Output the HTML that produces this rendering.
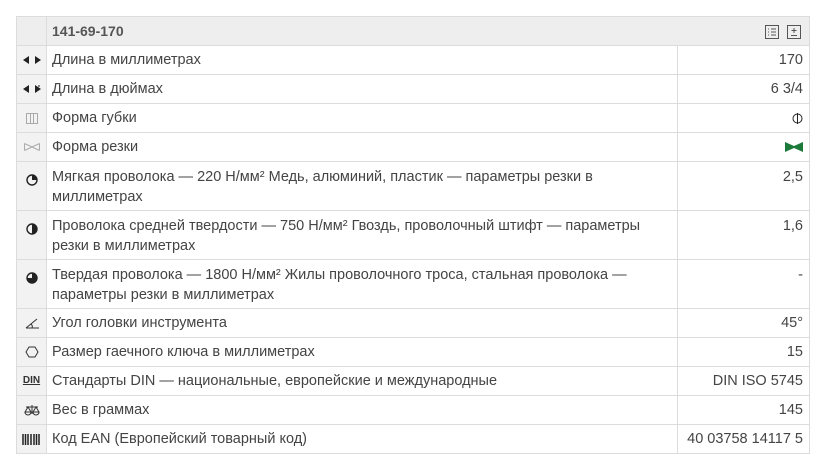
<!DOCTYPE html><html><head><meta charset="utf-8"><style>
body{margin:0;background:#fff;font-family:"Liberation Sans",sans-serif;color:#444;font-size:14.5px}
table{position:absolute;left:16px;top:16px;width:794px;border-collapse:collapse;table-layout:fixed}
td{border:1px solid #dcdcdc;padding:0 5px;vertical-align:top;line-height:20px;overflow:hidden;white-space:nowrap}
td.i{background:#f2f2f2;text-align:center;padding:0;font-size:11px;color:#333}
td.v{text-align:right;padding-right:6px}
tr.h td{background:#eeeeee;font-weight:bold;height:28px;vertical-align:middle;color:#555;font-size:14px}
tr.s td{height:28px;vertical-align:middle}
tr.t td{height:37px;padding-top:5px;padding-bottom:3px;white-space:normal}
tr.t td.i{padding-top:8px}
svg{display:inline-block;vertical-align:middle}
.hi{position:absolute;right:8px;top:7px;line-height:14px}
</style></head><body>
<table>
<colgroup><col style="width:30px"><col style="width:631px"><col style="width:132px"></colgroup>
<tr class="h"><td class="i"></td><td colspan="2" style="position:relative">141-69-170<span class="hi"><svg width="14" height="14"><rect x=".5" y=".5" width="13" height="13" fill="none" stroke="#555"/><path d="M3 4h1M3 7h1M3 10h1M6 4h5M6 7h5M6 10h5" stroke="#555"/></svg><svg width="14" height="14" style="margin-left:8px"><rect x=".5" y=".5" width="13" height="13" fill="none" stroke="#555"/><path d="M7 3v5M4.5 5.5h5M4 10.5h6" stroke="#555"/></svg></span></td></tr>
<tr class="s"><td class="i"><svg width="18" height="8"><path d="M0 4L6 0V8ZM18 4L12 0V8Z" fill="#222"/></svg></td><td>Длина в миллиметрах</td><td class="v">170</td></tr>
<tr class="s"><td class="i"><svg width="18" height="8"><path d="M0 4L6 0V8ZM18 4L12 0V8Z" fill="#222"/><path d="M16 0v2" stroke="#222"/></svg></td><td>Длина в дюймах</td><td class="v">6 3/4</td></tr>
<tr class="s"><td class="i"><svg width="12" height="11"><rect x=".5" y=".5" width="11" height="10" fill="none" stroke="#aaa"/><path d="M4.5 1v9M7.5 1v9" stroke="#aaa"/></svg></td><td>Форма губки</td><td class="v"><svg width="11" height="11"><circle cx="5.5" cy="5.5" r="4.5" fill="none" stroke="#222"/><path d="M5.5 0v11" stroke="#222"/></svg></td></tr>
<tr class="s"><td class="i"><svg width="16" height="8"><path d="M0.5 .5L8 4L15.5 .5M.5 7.5L8 4L15.5 7.5M.5 .5v7M15.5 .5v7" fill="none" stroke="#aaa"/></svg></td><td>Форма резки</td><td class="v"><svg width="18" height="10"><path d="M0 0L9 4L18 0L18 10L9 6L0 10Z" fill="#1b7a3a"/></svg></td></tr>
<tr class="t"><td class="i"><svg width="12" height="12"><circle cx="6" cy="6" r="5" fill="none" stroke="#222" stroke-width="1.4"/><path d="M6 6V1A5 5 0 0 1 11 6Z" fill="#222"/></svg></td><td>Мягкая проволока — 220 Н/мм² Медь, алюминий, пластик — параметры резки в миллиметрах</td><td class="v">2,5</td></tr>
<tr class="t"><td class="i"><svg width="12" height="12"><circle cx="6" cy="6" r="5" fill="none" stroke="#222" stroke-width="1.4"/><path d="M6 1A5 5 0 0 1 6 11Z" fill="#222"/></svg></td><td>Проволока средней твердости — 750 Н/мм² Гвоздь, проволочный штифт — параметры резки в миллиметрах</td><td class="v">1,6</td></tr>
<tr class="t"><td class="i"><svg width="12" height="12"><circle cx="6" cy="6" r="5" fill="none" stroke="#222" stroke-width="1.4"/><path d="M6 6V1A5 5 0 1 1 1 6Z" fill="#222"/></svg></td><td>Твердая проволока — 1800 Н/мм² Жилы проволочного троса, стальная проволока — параметры резки в миллиметрах</td><td class="v">-</td></tr>
<tr class="s"><td class="i"><svg width="14" height="12"><path d="M1 11H14M1 11L12 2M6 7Q8 9 7 11" fill="none" stroke="#333"/></svg></td><td>Угол головки инструмента</td><td class="v">45°</td></tr>
<tr class="s"><td class="i"><svg width="14" height="12"><path d="M4 1H10L13 6L10 11H4L1 6Z" fill="none" stroke="#333"/></svg></td><td>Размер гаечного ключа в миллиметрах</td><td class="v">15</td></tr>
<tr class="s"><td class="i" style="font-weight:bold;font-size:10px;text-decoration:underline">DIN</td><td>Стандарты DIN — национальные, европейские и международные</td><td class="v">DIN ISO 5745</td></tr>
<tr class="s"><td class="i"><svg width="16" height="12"><path d="M8 1V10M2 3H14M4 3L1 8H7ZM12 3L9 8H15ZM1 8A3 3 0 0 0 7 8M9 8A3 3 0 0 0 15 8" fill="none" stroke="#333"/></svg></td><td>Вес в граммах</td><td class="v">145</td></tr>
<tr class="s"><td class="i"><svg width="20" height="11"><path d="M1 0v11M3.5 0v11M6 0v11M9 0v11M12 0v11M14.5 0v11M17 0v11" stroke="#222" stroke-width="1.5"/></svg></td><td>Код EAN (Европейский товарный код)</td><td class="v">40 03758 14117 5</td></tr>
</table>
</body></html>
